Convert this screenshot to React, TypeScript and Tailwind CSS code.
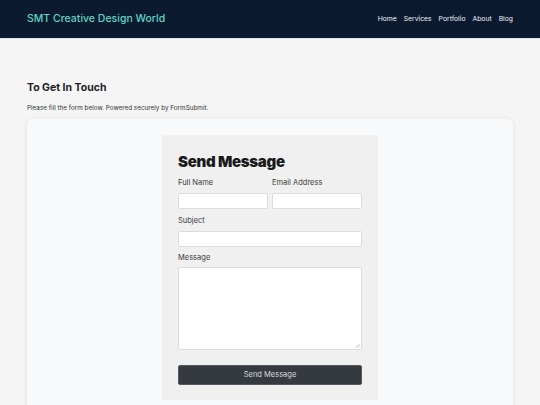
export default function App() {
  const navItems = ["Home", "Services", "Portfolio", "About", "Blog"];
  return (
    <div className="min-h-[405px] bg-[#f5f5f5] font-['Inter',sans-serif] text-[#222]">
      <header className="flex h-[39px] items-center justify-between border-b border-[#dfe2e6] bg-[#0b1a2e] px-[27px]">
        <span className="text-[10.5px] font-medium text-[#5fd4c2]">SMT Creative Design World</span>
        <nav className="flex gap-[7px] text-[6.8px] text-[#eef1f5]">
          {navItems.map((n) => (
            <span key={n}>{n}</span>
          ))}
        </nav>
      </header>
      <main className="px-[27px] pt-[42px] pb-[20px]">
        <h1 className="text-[10.5px] font-bold leading-[14px] text-[#1d1d1d]">To Get In Touch</h1>
        <p className="mt-[8px] text-[6.35px] leading-[10px] text-[#333]">
          Please fill the form below. Powered securely by FormSubmit.
        </p>
        <div className="mt-[6px] rounded-[6px] bg-[#f8f9fa] pt-[16px] pb-[16px] shadow-[0_1px_6px_rgba(0,0,0,0.08)]">
          <div className="mx-auto w-[216px] bg-[#f0f0f0] px-[16px] pt-[17px] pb-[15px]">
            <h2 className="text-[15px] font-black leading-[20px] tracking-[-0.3px] text-[#1a1a1a]">Send Message</h2>
            <div className="mt-[6px] grid grid-cols-2 gap-x-[4px]">
              <div>
                <label className="block text-[7.5px] leading-[10px] text-[#3a3a3a]">Full Name</label>
                <div className="mt-[5px] h-[16px] rounded-[2px] border border-[#dcdcdc] bg-white" />
              </div>
              <div>
                <label className="block text-[7.5px] leading-[10px] text-[#3a3a3a]">Email Address</label>
                <div className="mt-[5px] h-[16px] rounded-[2px] border border-[#dcdcdc] bg-white" />
              </div>
            </div>
            <label className="mt-[7px] block text-[7.5px] leading-[10px] text-[#3a3a3a]">Subject</label>
            <div className="mt-[5px] h-[16px] rounded-[2px] border border-[#dcdcdc] bg-white" />
            <label className="mt-[6px] block text-[7.5px] leading-[10px] text-[#3a3a3a]">Message</label>
            <div className="relative mt-[4px] h-[83px] rounded-[2px] border border-[#dcdcdc] bg-white">
              <svg className="absolute bottom-[1px] right-[1px]" width="5" height="5" viewBox="0 0 5 5">
                <path d="M1 4.5 L4.5 1 M3 4.5 L4.5 3" stroke="#999" strokeWidth="0.6" />
              </svg>
            </div>
            <button className="mt-[15px] flex h-[20px] w-full items-center justify-center rounded-[2px] border border-[#55595e] bg-[#343a40] text-[7.5px] text-[#d8dadc]">
              Send Message
            </button>
          </div>
        </div>
      </main>
    </div>
  );
}
